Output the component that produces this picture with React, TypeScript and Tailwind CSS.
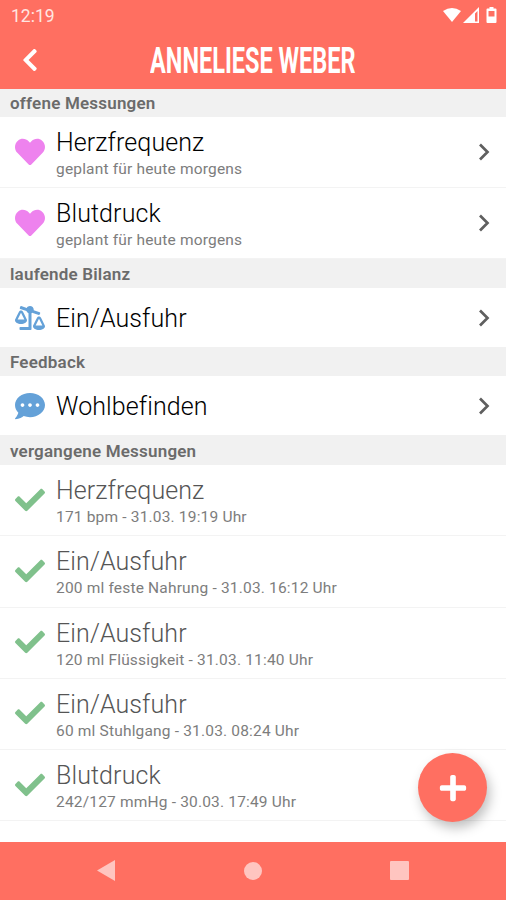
import React from "react";
import {
  FaBalanceScaleRight,
  FaCheck,
  FaChevronLeft,
  FaCommentDots,
  FaHeart,
  FaPlus,
} from "react-icons/fa";

type IconName = "heart" | "scale" | "comment" | "check";

interface Entry {
  id: number;
  icon: IconName;
  title: string;
  info?: string;
}

interface Section {
  title: string;
  headClass: string;
  rowClass: string;
  entries: Entry[];
  done?: boolean;
}

const sections: Section[] = [
  {
    title: "offene Messungen",
    headClass: "h-[28px] pt-[2px]",
    rowClass: "h-[71px]",
    entries: [
      { id: 1, icon: "heart", title: "Herzfrequenz", info: "geplant für heute morgens" },
      { id: 2, icon: "heart", title: "Blutdruck", info: "geplant für heute morgens" },
    ],
  },
  {
    title: "laufende Bilanz",
    headClass: "h-[29px] pt-[2px]",
    rowClass: "h-[59px]",
    entries: [{ id: 3, icon: "scale", title: "Ein/Ausfuhr" }],
  },
  {
    title: "Feedback",
    headClass: "h-[29px] pt-[2px]",
    rowClass: "h-[59px]",
    entries: [{ id: 4, icon: "comment", title: "Wohlbefinden" }],
  },
  {
    title: "vergangene Messungen",
    headClass: "h-[30px] pt-[3px]",
    rowClass: "h-[71.25px]",
    done: true,
    entries: [
      { id: 5, icon: "check", title: "Herzfrequenz", info: "171 bpm - 31.03. 19:19 Uhr" },
      { id: 6, icon: "check", title: "Ein/Ausfuhr", info: "200 ml feste Nahrung - 31.03. 16:12 Uhr" },
      { id: 7, icon: "check", title: "Ein/Ausfuhr", info: "120 ml Flüssigkeit - 31.03. 11:40 Uhr" },
      { id: 8, icon: "check", title: "Ein/Ausfuhr", info: "60 ml Stuhlgang - 31.03. 08:24 Uhr" },
      { id: 9, icon: "check", title: "Blutdruck", info: "242/127 mmHg - 30.03. 17:49 Uhr" },
    ],
  },
];

const icons: Record<IconName, React.ReactNode> = {
  heart: <FaHeart className="size-[30px] text-[#ee82ee]" />,
  scale: <FaBalanceScaleRight className="h-[24px] w-[30px] text-[#64a1d8]" />,
  comment: <FaCommentDots className="size-[30px] text-[#64a1d8]" />,
  check: <FaCheck className="mb-[1px] size-[30px] text-[#80c18c]" />,
};

const StatusBar = () => (
  <div className="flex h-8 items-center justify-between pl-[11px] pr-[8px]">
    <span className="text-[17.5px] leading-[32px] text-[#ffe6e2]">12:19</span>
    <svg className="mb-[2px] h-[18px] w-[56px]" viewBox="0 0 56 18" fill="#fff">
      <path d="M1 5Q10 -1 19 5L10 16Z" />
      <path fillRule="evenodd" d="M37 1V17H21ZM33 7.500V15.500H35.500V5Z" />
      <path
        fillRule="evenodd"
        d="M47.500 1h4v1.500h2q1 0 1 1V16q0 1-1 1h-8q-1 0-1-1V3.500q0-1 1-1h2ZM46.500 5v5.500h6V5Z"
      />
    </svg>
  </div>
);

const Row = ({ entry, done, className }: { entry: Entry; done?: boolean; className: string }) => (
  <div className={`flex shrink-0 items-center pl-[15px] pr-[16px] ${className} ${entry.info ? "border-b border-[#f3f3f3]" : ""}`}>
    <div className="flex w-[30px] shrink-0 justify-center">{icons[entry.icon]}</div>
    <div className="ml-[11px] flex-1 whitespace-nowrap pt-[3px]">
      <div className={`text-[25px] font-light leading-[30px] tracking-[0.1px] ${done ? "text-[#555]" : "text-black"}`}>
        {entry.title}
      </div>
      {entry.info && (
        <div className="mt-[1px] text-[15.5px] leading-[20px] tracking-[0.18px] text-[#7d7d7d]">{entry.info}</div>
      )}
    </div>
    {!done && (
      <svg className="h-[18px] w-[12px]" viewBox="0 0 12 18" fill="none" stroke="#5f5f5f" strokeWidth="2.700">
        <path d="M2 1.500L9.500 9L2 16.500" />
      </svg>
    )}
  </div>
);

const App: React.FC = () => {
  return (
    <div className="relative flex h-[900px] w-[506px] flex-col overflow-hidden bg-white font-['Roboto',sans-serif]">
      <header className="h-[89px] shrink-0 bg-[#ff6f61] text-white">
        <StatusBar />
        <div className="grid h-[56px] grid-cols-[60px_1fr_60px] items-center">
          <FaChevronLeft className="ml-[21px] h-[26px] w-[18px]" />
          <h1 className="origin-center scale-x-[0.635] justify-self-center whitespace-nowrap text-[37px] font-bold leading-none">
            ANNELIESE WEBER
          </h1>
        </div>
      </header>

      <main className="flex-1">
        {sections.map((section) => (
          <section key={section.title}>
            <h2
              className={`flex items-center bg-[#f1f1f1] pl-[10px] text-[17px] font-semibold tracking-[0.2px] text-[#6b6b6b] ${section.headClass}`}
            >
              {section.title}
            </h2>
            {section.entries.map((entry) => (
              <Row key={entry.id} entry={entry} done={section.done} className={section.rowClass} />
            ))}
          </section>
        ))}
      </main>

      <button
        aria-label="Hinzufügen"
        className="absolute bottom-[78px] right-[19px] flex size-[69px] items-center justify-center rounded-full bg-[#ff6f61] text-white shadow-[3px_6px_12px_rgba(0,0,0,0.25)]"
      >
        <FaPlus className="size-[30px]" />
      </button>

      {/* Android navigation */}
      <nav className="relative flex h-[58.5px] shrink-0 items-center justify-between bg-[#ff6f61] pl-[97px] pr-[97px]">
        <svg className="h-[21px] w-[18px]" viewBox="0 0 18 21" fill="#ffc5c0">
          <path d="M0 10.500L18 0V21Z" />
        </svg>
        <div className="size-[18px] rounded-full bg-[#ffc5c0]" />
        <div className="size-[19px] rounded-[1px] bg-[#ffc5c0]" />
      </nav>
    </div>
  );
};

export default App;
